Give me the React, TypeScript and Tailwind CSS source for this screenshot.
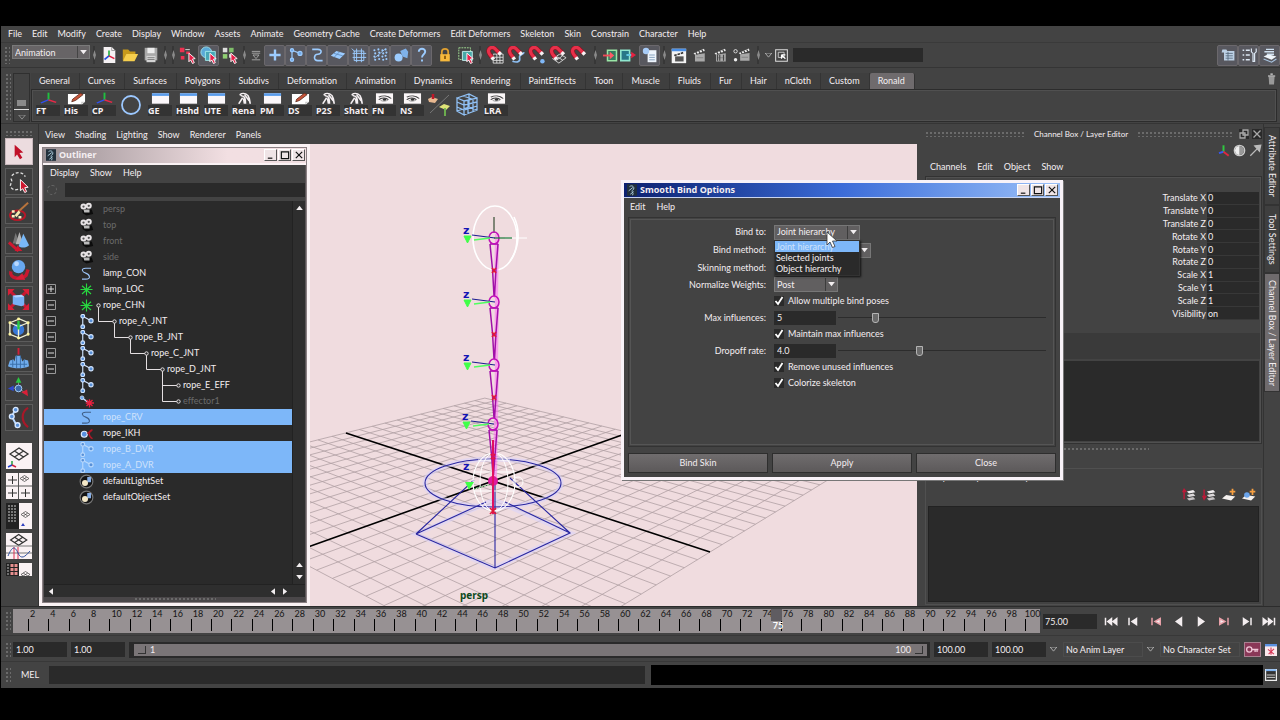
import React from "react";

type P = { children?: React.ReactNode };

/* ---------- small shared pieces ---------- */

const Svg = ({ children, size = "size-[18px]" }: P & { size?: string }) => (
  <svg viewBox="0 0 20 20" className={`${size} shrink-0`} fill="none" aria-hidden="true">
    {children}
  </svg>
);

const Sep = ({ w = "w-[8px]" }: { w?: string }) => (
  <span className={`${w} flex h-full shrink-0 items-center justify-center`}>
    <svg viewBox="0 0 6 18" className="h-[18px] w-[6px]" fill="none">
      <path d="M3 0v18" stroke="#2c2c2c" />
      <path d="M3.500 4 L5 9 L3.500 14 L2 9Z" fill="#8a8a8a" />
    </svg>
  </span>
);

const Dots = ({ className }: { className: string }) => (
  <span
    className={`${className} block shrink-0 bg-[radial-gradient(#6b6b6b_0.8px,transparent_1px)] bg-[length:4px_4px]`}
  />
);

const Tri = ({ className = "" }: { className?: string }) => (
  <svg viewBox="0 0 8 6" className={`h-[5px] w-[7px] ${className}`} aria-hidden="true">
    <path d="M0 0h8L4 5z" fill="#f2eef0" />
  </svg>
);

const Menu = ({ items, className = "" }: { items: string[]; className?: string }) => (
  <nav className={`flex items-center ${className}`}>
    {items.map((t) => (
      <button key={t} type="button" className="whitespace-nowrap">
        {t}
      </button>
    ))}
  </nav>
);

const Tool = ({ children, on, label, w = "w-[21px]" }: P & { on?: boolean; label: string; w?: string }) => (
  <button
    type="button"
    aria-label={label}
    className={`${w} flex h-[21px] shrink-0 items-center justify-center ${
      on ? "rounded-[2px] border border-[#6b686c] bg-[#58585f]" : ""
    }`}
  >
    {children}
  </button>
);

const Cursor = () => <path d="M11 8l7 6-3 .5 2 4-2 1-2-4-2 2z" fill="#e8204a" stroke="#fff" strokeWidth="1" />;

/* ---------- status line icons ---------- */

const NewScene = () => (
  <Svg>
    <path d="M4 1h9l4 4v14H4z" fill="#f6f2f4" />
    <path d="M13 1v4h4" stroke="#999" />
    <path d="M10 11V5" stroke="#20b040" strokeWidth="1.800" />
    <path d="M10 11l-5 4" stroke="#2850e0" strokeWidth="1.800" />
    <path d="M10 11l6 3" stroke="#e02040" strokeWidth="1.800" />
  </Svg>
);
const OpenScene = () => (
  <Svg>
    <path d="M2 16V4h6l2 2h6v3" fill="#c79a1c" />
    <path d="M2 17L6 9h13l-4 8z" fill="#f6cf4e" />
  </Svg>
);
const Save = () => (
  <Svg>
    <path d="M3 2h14v14H3z" fill="#a9a9a9" />
    <path d="M6 2h8v6H6z" fill="#ececec" />
    <path d="M5 11h10v7H5z" fill="#d4d4d4" />
    <path d="M6 13h8M6 15h8" stroke="#777" />
  </Svg>
);
const SelHier = () => (
  <Svg>
    <path d="M1 2h5v5H1zM8 6h4v3H8zM2 11h4v4H2z" fill="#ee3050" />
    <path d="M7 4h5" stroke="#ddd" />
    <Cursor />
  </Svg>
);
const SelObj = () => (
  <Svg>
    <circle cx="7" cy="7" r="6" fill="#5aa9d8" stroke="#9fe4ee" />
    <path d="M6 6h11v10H6z" fill="#48a8b8" stroke="#a4ecec" />
    <Cursor />
  </Svg>
);
const SelComp = () => (
  <Svg>
    <path d="M2 2h5v5H2z" fill="#dcdcdc" />
    <path d="M9 2h5v5H9z" fill="#7fbf6a" />
    <path d="M2 9h5v5H2z" fill="#8fcf72" />
    <path d="M9 9h4v4H9z" fill="#dcdcdc" />
    <Cursor />
  </Svg>
);
const B = "#9cccff";
const masks: [string, React.ReactNode][] = [
  ["Handles", <path d="M10 3v14M3 10h14" stroke={B} strokeWidth="3" />],
  [
    "Joints",
    <g stroke={B} strokeWidth="1.500">
      <path d="M5 4v12M5 4l10 4" />
      <g fill="#6fa8e8">
        <circle cx="5" cy="4" r="2" />
        <circle cx="5" cy="16" r="2" />
        <circle cx="15" cy="8" r="2.500" />
      </g>
    </g>,
  ],
  ["Curves", <path d="M4 3h7c6 0 5 6 0 6s-6 8 0 8h6" stroke={B} strokeWidth="2" />],
  [
    "Surfaces",
    <g>
      <path d="M1 11l7-6 11 3-7 7z" fill={B} />
      <path d="M5 8l11 3M12 6l-7 7" stroke="#5d86b8" />
    </g>,
  ],
  ["Deformers", <path d="M4 5h12v12H4zM1 2l4 4M13 2v17M7 2v17M2 8h17M2 13h17" stroke={B} strokeWidth="1.200" />],
  [
    "Dynamics",
    <g fill={B}>
      {[3, 8, 13, 17].map((x, i) =>
        [4, 8, 12, 16].map((y, j) => <circle key={`${i}${j}`} cx={x + (j % 2)} cy={y - (i % 2)} r="1.300" />),
      )}
      <path d="M3 14L16 3" stroke={B} />
    </g>,
  ],
  [
    "Rendering",
    <g fill={B}>
      <circle cx="7" cy="13" r="5" />
      <path d="M9 5l7-3 3 4-1 8-6-2z" fill="#7fb2ea" />
    </g>,
  ],
  ["Miscellaneous", <path d="M6 6c0-5 8-5 8 0 0 3-4 3-4 7M10 15.500v2.500" stroke={B} strokeWidth="2.400" />],
];

const Magnet = ({ children }: P) => (
  <Svg>
    {children}
    <path d="M7 13L4 9C0 3 7 -1 11 4l4 4" stroke="#8c1020" strokeWidth="5" />
    <path d="M7 13L4 9C0 3 7 -1 11 4l4 4" stroke="#e8304a" strokeWidth="3.600" />
    <path d="M6.500 12.500l2 2.500M14 7l2.500 2.500" stroke="#f6f2f4" strokeWidth="4" />
  </Svg>
);
const magnets: [string, React.ReactNode][] = [
  ["Snap to grids", <path d="M8 9h11v10H8zM12 9v10M15.500 9v10M8 12.500h11M8 16h11" stroke="#ddd" />],
  ["Snap to curves", <path d="M19 7c-1 3-6 2-5 6s-2 6-8 4" stroke="#8ec0f4" strokeWidth="1.800" />],
  ["Snap to points", <circle cx="16" cy="17" r="2.500" fill="#80b8f8" />],
  ["Snap to planes", <path d="M4 14l8-5 7 4-8 6zM8 11.500l7 4M8 16l7-5" stroke="#ddd" />],
  ["Make live", null],
];

const Clap = ({ children }: P) => (
  <g>
    <path d="M4 9l13-2v11H4z" fill="#a9a9a9" />
    <path d="M2 7l14-6 1 3L4 9z" fill="#ececec" />
    <path d="M5 5.500l2 3M9 4l2 3M13 2.500l2 3" stroke="#333" strokeWidth="1.500" />
    <path d="M6 13h9" stroke="#777" />
    {children}
  </g>
);

const StatusLine = () => (
  <div className="flex h-[25px] items-center border-t border-[#3a3a3a] pl-[3px]">
    <Dots className="mr-[2px] h-[18px] w-[6px]" />
    <div className="relative mt-[2px] h-[14px] w-[78px] self-start">
      <select
        aria-label="Menu set"
        className="h-full w-full appearance-none border border-[#7a7a7a] bg-[#676466] pl-[2px] leading-[11px]"
      >
        <option>Animation</option>
      </select>
      <span className="pointer-events-none absolute inset-y-px right-px flex w-[12px] items-center justify-center border-l border-[#444]">
        <Tri />
      </span>
    </div>
    <Sep />
    <Tool label="New scene"><NewScene /></Tool>
    <Tool label="Open scene"><OpenScene /></Tool>
    <Tool label="Save scene"><Save /></Tool>
    <Sep />
    <Sep />
    <Tool label="Select by hierarchy"><SelHier /></Tool>
    <Tool label="Select by object" on><SelObj /></Tool>
    <Tool label="Select by component"><SelComp /></Tool>
    <Sep />
    <Tool label="Selection mask" w="w-[16px]">
      <Svg size="size-[12px]"><path d="M3 4h14M3 7h14M5 10h10l-5 6zM3 18h14" stroke="#aaa" strokeWidth="1.500" /></Svg>
    </Tool>
    {masks.map(([n, d]) => (
      <Tool key={n} label={n} on><Svg size="size-[16px]">{d}</Svg></Tool>
    ))}
    <span className="w-[2px]" />
    <Tool label="Lock selection">
      <Svg size="size-[16px]">
        <path d="M6 10V6c0-5 8-5 8 0v4" stroke="#e0a030" strokeWidth="2.200" />
        <path d="M4 9h12v9H4z" fill="#f6b83c" />
        <path d="M10 11v4" stroke="#7a4a00" strokeWidth="2" />
      </Svg>
    </Tool>
    <Tool label="Highlight selection">
      <Svg>
        <path d="M2 2h13v13H2z" stroke="#a8e89a" strokeDasharray="2 1" />
        <path d="M6 6h11v10H6z" fill="#48a8a8" stroke="#c8f4f4" />
        <Cursor />
      </Svg>
    </Tool>
    <Sep />
    {magnets.map(([n, d]) => (
      <Tool key={n} label={n}><Magnet>{d}</Magnet></Tool>
    ))}
    <Sep w="w-[12px]" />
    <Tool label="Inputs" w="w-[18px]">
      <Svg size="size-[15px]">
        <path d="M6 3h12v14H6z" fill="#357a60" stroke="#9ae6a6" strokeWidth="2" />
        <path d="M0 10h10" stroke="#f04a58" strokeWidth="2.500" />
        <path d="M9 5l6 5-6 5z" fill="#ff5a66" />
      </Svg>
    </Tool>
    <Tool label="Outputs" w="w-[18px]">
      <Svg size="size-[16px]">
        <path d="M1 4h11v13H1z" fill="#287888" stroke="#8fe6ce" strokeWidth="2" />
        <path d="M8 10h8" stroke="#60c8e0" strokeWidth="2.500" />
        <path d="M14 6l6 4-6 4z" fill="#e82040" />
      </Svg>
    </Tool>
    <span className="w-[2px]" />
    <Tool label="Construction history" on>
      <Svg size="size-[16px]">
        <path d="M7 4h11v15H7z" fill="#eef4fc" />
        <path d="M9 10h7M9 13h7M9 16h7" stroke="#7090b0" />
        <circle cx="5" cy="5" r="4" fill="#a8ccf8" />
      </Svg>
    </Tool>
    <Sep />
    <Tool label="Render view">
      <Svg size="size-[17px]">
        <path d="M2 2h17v17H2z" fill="#f4f4f4" />
        <path d="M2 2h17v3H2z" fill="#4a90e8" />
        <path d="M6 11h10v6H6z" fill="#555" />
        <path d="M5 10l11-3.500" stroke="#333" strokeWidth="2" strokeDasharray="3 1" />
      </Svg>
    </Tool>
    <Tool label="Render frame"><Svg size="size-[15px]"><Clap /></Svg></Tool>
    <Tool label="IPR render">
      <Svg size="size-[15px]"><Clap><path d="M6 9v8M9 9v8M14 9v8" stroke="#444" strokeWidth="1.500" /></Clap></Svg>
    </Tool>
    <Tool label="Render settings">
      <Svg size="size-[17px]">
        <g transform="translate(5 1) scale(0.85)"><Clap /></g>
        <circle cx="3" cy="5" r="2" stroke="#eee" />
        <circle cx="3" cy="15" r="2" fill="#eee" />
      </Svg>
    </Tool>
    <Sep w="w-[12px]" />
    <Tool label="Input mode" w="w-[9px]"><svg viewBox="0 0 8 6" className="h-[5px] w-[7px]"><path d="M0 0h8L4 5z" stroke="#bbb" fill="none" /></svg></Tool>
    <Tool label="Quick selection" w="w-[17px]">
      <Svg size="size-[13px]">
        <path d="M1 1h18v18H1z" stroke="#ddd" strokeWidth="1.600" />
        <path d="M5 5h9v8H5z" stroke="#ccc" strokeWidth="1.400" />
        <path d="M10 9l6 6M10 9v6M10 9h6" stroke="#fff" strokeWidth="1.800" />
      </Svg>
    </Tool>
    <input aria-label="Select by name" className="ml-[3px] h-[14px] w-[130px] bg-[#2a2a2a]" />
    <span className="flex-1" />
    <div className="flex">
      <Tool label="Attribute editor" on>
        <Svg size="size-[16px]">
          <path d="M3 3h5l1 2h9v12H5V7H2z" fill="#bcd0e4" />
          <path d="M7 8h9M7 11h9M7 14h9M10 6v11" stroke="#506478" />
        </Svg>
      </Tool>
      <Tool label="Tool settings" on>
        <Svg size="size-[16px]">
          <path d="M2 4h2M6 4h5M2 10h2M6 10h5M2 16h2M6 16h5" stroke="#dbe6f2" strokeWidth="2" />
          <path d="M13 2v4l2 2v10h2V8l2-2V2" stroke="#dbe6f2" strokeWidth="1.500" />
        </Svg>
      </Tool>
      <Tool label="Channel box" on>
        <Svg size="size-[16px]">
          <path d="M2 12l6-3 10 3-6 4z" fill="#eef4fa" />
          <path d="M2 15l10 4 6-4" stroke="#a8c4e0" strokeWidth="1.500" />
          <path d="M5 3h10M3 6h12M6 9h9" stroke="#cfe0f0" strokeWidth="1.800" />
        </Svg>
      </Tool>
    </div>
  </div>
);

/* ---------- shelf ---------- */

const shelfTabs = [
  "General", "Curves", "Surfaces", "Polygons", "Subdivs", "Deformation", "Animation", "Dynamics", "Rendering",
  "PaintEffects", "Toon", "Muscle", "Fluids", "Fur", "Hair", "nCloth", "Custom", "Ronald",
];

const Axes = () => (
  <>
    <path d="M10 12V1" stroke="#20c040" strokeWidth="2" />
    <path d="M10 12l-8 5" stroke="#3050f0" strokeWidth="2" />
    <path d="M10 12l8 4" stroke="#e82848" strokeWidth="2" />
  </>
);
const Pencil = () => (
  <>
    <path d="M1 3h18v12l-3 4H1z" fill="#fff" />
    <path d="M5 15l1-4 8-9 3 2-8 9z" fill="#c8553a" stroke="#5a2a1a" />
    <path d="M15 19l4-4h-4z" fill="#ccc" />
  </>
);
const Win = () => (
  <>
    <path d="M1 2h18v16H1z" fill="#fbf7fa" />
    <path d="M1 2h18v4H1z" fill="#5a9cec" />
  </>
);
const Mel = () => (
  <path
    d="M5 4c4-4 9-1 10 6l1 8M6 6c4-1 5 3 5 12M8 9l-4 9M9 10l1 8M10 4l5 10M5 4l5 4"
    stroke="#f5f0f2"
    strokeWidth="1.800"
  />
);
const Eye = () => (
  <>
    <path d="M1 2h18v16H1z" fill="#fbf7f8" />
    <path d="M4 8c4-3 9-3 13 2M4 12c3-4 8-3 10 0" stroke="#444" strokeWidth="1.500" />
    <path d="M6 13c3 2 6 1 8-1" stroke="#888" strokeWidth="1" />
    <circle cx="10" cy="11.500" r="1.800" fill="#333" />
  </>
);

const shelf: [string, React.ReactNode][] = [
  ["FT", <Axes />], ["His", <Pencil />], ["CP", <Axes />],
  ["circle", null],
  ["GE", <Win />], ["Hshd", <Win />], ["UTE", <Win />], ["Rena", <Mel />], ["PM", <Win />],
  ["DS", <Pencil />], ["P2S", <Mel />], ["Shatt", <Mel />], ["FN", <Eye />], ["NS", <Eye />],
  ["graph", null], ["lattice", null], ["LRA", <Eye />],
];

const bigShelf: Record<string, React.ReactNode> = {
  circle: <circle cx="12" cy="12" r="9" stroke="#9cc8ff" strokeWidth="1.800" />,
  graph: (
    <>
      <path d="M3 20L22 2" stroke="#777" />
      <path d="M1 6l4-2 6 2-3 4-6-1z" fill="#e8b890" />
      <path d="M6 1v5" stroke="#c01828" strokeWidth="2.500" />
      <path d="M12 14l5-3 6 2-4 4z" fill="#e0e478" />
      <path d="M18 15v8" stroke="#70b850" strokeWidth="1.800" />
    </>
  ),
  lattice: (
    <path
      d="M2 5l7 3v14l-7-4zM9 8l13-3v12L9 22M2 5l12-4 8 4M2 9l7 3 13-3M2 14l7 3 13-4M13 7v14M18 6v13M14 1v13l-12 4M14 14l8 3M8 3l9 3"
      stroke="#90c0f4"
      strokeWidth="1.300"
    />
  ),
};

const Shelf = () => (
  <div className="flex h-[56px] border-t border-[#353535] pt-[5px] pl-[4px]">
    <Dots className="h-[48px] w-[6px]" />
    <div className="mr-px ml-[2px] flex h-[49px] w-[17px] flex-col items-center border border-[#2f2f2f]">
      <span className="mt-[26px] h-[6px] w-[9px] bg-[#8a8a8a]" />
      <span className="mt-[3px] h-px w-full bg-[#ddd]" />
      <svg viewBox="0 0 8 6" className="mt-[5px] h-[5px] w-[8px]"><path d="M0 0h8L4 5z" stroke="#999" fill="none" /></svg>
    </div>
    <div className="flex min-w-0 flex-1 flex-col pr-[3px]">
      <div className="flex h-[16px]">
        {shelfTabs.map((t) => (
          <button
            key={t}
            type="button"
            className={`h-full border-r pr-[9px] pl-[8px] whitespace-nowrap ${
              t === "Ronald" ? "rounded-t-[2px] border-[#333] bg-[#6f6b6d]" : "border-[#343434] bg-[#3f3f3f]"
            }`}
          >
            {t}
          </button>
        ))}
        <span className="flex-1" />
        <button type="button" aria-label="Delete shelf item" className="self-start">
          <Svg size="size-[12px]">
            <path d="M6 6h10l-1 13H7z" fill="#999" />
            <path d="M5 5h12M9 2h4" stroke="#ddd" strokeWidth="2" />
          </Svg>
        </button>
      </div>
      <div className="flex h-[33px] border border-[#2c2c2c] pt-[2px] pl-px outline outline-[#505050] outline-offset-[-2px]">
        {shelf.map(([n, d], i) =>
          d ? (
            <button key={i} type="button" className="flex w-[28px] flex-col items-start pl-[3px] text-left">
              <svg viewBox="0 0 20 20" preserveAspectRatio="none" className="ml-[3px] h-[13px] w-[19px]" fill="none">{d}</svg>
              <b className="w-[24px] bg-[#333] font-['Noto_Sans'] text-[9px] leading-[11px] whitespace-nowrap">{n}</b>
            </button>
          ) : (
            <button key={i} type="button" aria-label={n} className="flex w-[28px] justify-center pt-px">
              <svg viewBox="0 0 24 24" className="size-[24px]" fill="none">{bigShelf[n]}</svg>
            </button>
          ),
        )}
      </div>
    </div>
  </div>
);

/* ---------- tool box ---------- */

const tools: [string, React.ReactNode][] = [
  ["Select", <path d="M8 5l9 8-4 .5 3 5-2.500 1.500-3-5-2.500 3z" fill="#c01028" />],
  [
    "Lasso",
    <>
      <path d="M5 6c4-5 12-4 14 1M4 9c3 3-2 6 0 9s5 3 8 2" stroke="#ddd" strokeWidth="1.400" strokeDasharray="3 2" />
      <path d="M14 10l8 8-3.500.5 2 4-2 1-2-4-2.500 2z" fill="#d01830" stroke="#fff" />
    </>,
  ],
  [
    "Paint selection",
    <>
      <ellipse cx="11" cy="17" rx="8" ry="5" stroke="#b81828" strokeWidth="2" />
      <path d="M12 13l10-9" stroke="#b8743c" strokeWidth="2" />
      <path d="M8 17l4-5 2 2-4 5z" fill="#f6e8b0" />
      <path d="M5 13h3M5 18h3M12 19h3" stroke="#fff2c0" strokeWidth="2.500" />
    </>,
  ],
  [
    "Move",
    <>
      <path d="M6 15L9 4l4 11z" fill="#777" />
      <path d="M9 16L13 3l4 13z" fill="#b4b4b4" />
      <path d="M12 18L17 5l6 12c-3 3-8 3-11 1z" fill="#78b8f8" />
      <path d="M2 14l10 9" stroke="#d01830" strokeWidth="3" />
      <path d="M8 23h8l-5-6z" fill="#d01830" />
    </>,
  ],
  [
    "Rotate",
    <>
      <path d="M4 14c-2 8 11 9 16 4l2-6" stroke="#c81830" strokeWidth="3.500" />
      <path d="M9 22l7-6 3 7z" fill="#d82038" />
      <circle cx="12" cy="9" r="7" fill="#68a8f0" />
      <circle cx="10" cy="6" r="2.500" fill="#b8d8ff" />
    </>,
  ],
  [
    "Scale",
    <>
      <path d="M3 3l18 18M21 3L3 21" stroke="#c81830" strokeWidth="3" />
      <path d="M1 1h7L1 8zM23 1v7l-7-7zM1 23v-7l7 7zM23 23h-7l7-7z" fill="#d82038" />
      <path d="M6 8l9-1 3 2v9l-3 1-9-2z" fill="#78b0f4" />
      <path d="M6 8l9-1 3 2-9 1z" fill="#b0d4ff" />
    </>,
  ],
  [
    "Universal manipulator",
    <>
      <circle cx="12" cy="13" r="6" fill="#3878d8" />
      <path d="M3 6l10-4 9 4v12l-9 4-10-4zM3 6l9 4 10-4M12 10v12" stroke="#f0f0d8" strokeWidth="1.400" />
      <path d="M12 4v9" stroke="#28c840" strokeWidth="2.500" />
      <path d="M3 6h.1M22 6h.1M3 18h.1M22 18h.1M12 22h.1M12 2h.1" stroke="#fff6a0" strokeWidth="3" strokeLinecap="round" />
    </>,
  ],
  [
    "Soft modification",
    <>
      <path d="M1 20l2-6 4-1 1 2 1-6h5l2 6 2-2 4 1 1 6c-6 3-16 3-22 0z" fill="#70acec" />
      <path d="M6 13v8M10 9v13M14 9v13M18 13v8M3 18h18" stroke="#3a6ea8" />
      <path d="M12 8V1" stroke="#d02038" strokeWidth="2" />
    </>,
  ],
  [
    "Show manipulator",
    <>
      <path d="M12 12l-7 1M12 12l7 6M12 12V6" stroke="#888" />
      <path d="M9 7l3-6 3 6z" fill="#28c840" />
      <path d="M1 13l6-3v6z" fill="#3048d0" />
      <path d="M15 17l6-3 1 7z" fill="#d82038" />
      <circle cx="12" cy="13" r="3.500" fill="#3a68a8" stroke="#a8ccf4" />
    </>,
  ],
  [
    "Last tool",
    <>
      <path d="M9 3L5 11l5 9" stroke="#b8d8ff" strokeWidth="2" />
      <g fill="#5a90d8" stroke="#d8e8ff" strokeWidth="1.400">
        <circle cx="9" cy="4" r="2.500" />
        <circle cx="5" cy="11" r="2.500" />
        <circle cx="11" cy="20" r="2.500" />
      </g>
      <path d="M22 2c-7 4-8 14 0 20" stroke="#a81828" strokeWidth="2.200" />
    </>,
  ],
];

const MiniGrid = ({ x = 0, y = 0, s = 1 }: { x?: number; y?: number; s?: number }) => (
  <path
    transform={`translate(${x} ${y}) scale(${s})`}
    d="M4 11l9-6 9 6-9 6zM8.500 8l9 6M17.500 8l-9 6"
    stroke="#333"
    strokeWidth="1.300"
  />
);
const layouts: [string, React.ReactNode][] = [
  [
    "Single perspective",
    <>
      <path d="M0 0h26v26H0z" fill="#faf2f4" />
      <MiniGrid />
      <path d="M6 22v-4" stroke="#20a040" strokeWidth="1.500" />
      <path d="M6 22l-4 2" stroke="#2040d0" strokeWidth="1.500" />
      <path d="M6 22l4 2" stroke="#d02040" strokeWidth="1.500" />
    </>,
  ],
  [
    "Four view",
    <>
      <path d="M0 0h26v26H0z" fill="#faf2f4" />
      <path d="M12.500 0v26M0 13h26" stroke="#555" />
      <path d="M6.500 3v8M2 7h9M6.500 16v8M2 20h9M19.500 16v8M15 20h9" stroke="#333" />
      <MiniGrid x={12} y={0} s={0.5} />
    </>,
  ],
  [
    "Outliner and perspective",
    <>
      <path d="M0 0h13v26H0z" fill="#222" />
      <path d="M13 0h13v26H13z" fill="#faf2f4" />
      <path d="M2 3h8M2 6h8M2 9h8M2 12h8M2 15h8M2 18h8" stroke="#ccc" strokeDasharray="2 1" />
      <MiniGrid x={13} y={6} s={0.5} />
      <path d="M15 23l2-3 2 3z" fill="#3040c0" />
    </>,
  ],
  [
    "Perspective and graph",
    <>
      <path d="M0 0h26v26H0z" fill="#faf2f4" />
      <MiniGrid x={1} y={-3} s={0.9} />
      <path d="M0 13h26M0 20h26" stroke="#777" />
      <path d="M8 14v12M12 14v12" stroke="#e03050" />
      <path d="M2 23c4-10 7-10 10-3s7 4 12-2" stroke="#3050a0" />
    </>,
  ],
];

const ToolBox = () => (
  <aside className="flex w-[38px] shrink-0 flex-col items-center border-r border-[#333] pr-[2px]">
    <Dots className="mt-[6px] mb-[2px] h-[6px] w-[27px]" />
    <div className="flex h-[293px] flex-col justify-between">
      {tools.map(([n, d], i) => (
        <button
          key={n}
          type="button"
          aria-label={n}
          className={`flex h-[27px] w-[28px] items-center justify-center border ${
            i === 0 ? "border-[#c8b8bc] bg-[#ecdcdf]" : "border-[#5c5c5c] bg-[#3d3d3d]"
          }`}
        >
          <svg viewBox="0 0 24 24" className="size-[23px]" fill="none">{d}</svg>
        </button>
      ))}
    </div>
    <div className="mt-[12px] flex flex-col gap-[4px]">
      {layouts.map(([n, d]) => (
        <button key={n} type="button" aria-label={n} className="block size-[26px]">
          <svg viewBox="0 0 26 26" className="size-full" fill="none">{d}</svg>
        </button>
      ))}
      <button type="button" aria-label="Hypershade and perspective" className="block h-[13px] w-[26px]">
        <svg viewBox="0 0 26 13" className="size-full" fill="none">
          <path d="M0 0h13v13H0z" fill="#222" />
          <path d="M13 0h13v13H13z" fill="#faf2f4" />
          <path d="M6 1v11M10 1v11" stroke="#e89090" strokeWidth="3" strokeDasharray="3 1" />
          <path d="M2 1v11" stroke="#bbb" strokeDasharray="2 1" />
          <MiniGrid x={13} y={6} s={0.5} />
        </svg>
      </button>
    </div>
  </aside>
);

/* ---------- 3D viewport ---------- */

const project = (u: number, v: number) => {
  const w = 1 - 0.192 * u + 0.205 * v;
  return `${((493 + 80.7 * u + 264.9 * v) / w).toFixed(1)} ${((481 - 35 * u + 40.2 * v) / w).toFixed(1)}`;
};
/* the v axis runs from the lower left to the upper right of the view */
const gridPath = Array.from({ length: 25 }, (_, i) => i / 12 - 1)
  .filter((t) => Math.abs(t) > 0.01)
  .map((t) => `M${project(t, -1)}L${project(t, 1)}M${project(-1, t)}L${project(1, t)}`)
  .join("");

const joints = [
  [494, 238, 64],
  [494, 302, 63],
  [494, 365, 59],
  [493, 424, 57],
];

const Scene = () => (
  <svg
    viewBox="39 144 878 462"
    preserveAspectRatio="xMinYMin slice"
    className="absolute inset-0 size-full bg-[#f0dcdf]"
    fill="none"
  >
    <path d={gridPath} stroke="#b0a0a3" strokeWidth="0.8" />
    <path d={`M${project(-1, 0)}L${project(1, 0)}M${project(0, -1)}L${project(0, 1)}`} stroke="#000" strokeWidth="1.600" />
    <g stroke="#dcd4fa" strokeWidth="5" opacity="0.6">
      <path d="M416 534l78 34 76-35-76-33z" />
      <ellipse cx="493" cy="483" rx="68" ry="24" />
    </g>
    <g stroke="#2826a0" strokeWidth="1.100">
      <ellipse cx="493" cy="483" rx="68" ry="24" />
      <path d="M416 534l79 34 75-35-65-31M416 534l70-32M416 534l58-54M570 533l-60-55M495 482v86" />
    </g>
    <g stroke="#fff" strokeWidth="1.600">
      <ellipse cx="495" cy="238" rx="22" ry="32" />
      <path d="M514 217c6 12 6 30-4 44" />
      <ellipse cx="494" cy="482" rx="21" ry="29" strokeWidth="1.200" />
      <ellipse cx="494" cy="482" rx="14" ry="29" strokeWidth="1" />
      <path d="M478 460h32M474 472h40M474 491h40M505 238h22" strokeWidth="1" />
      <circle cx="518" cy="482" r="5" strokeWidth="1" />
    </g>
    <path d="M494 217v16" stroke="#103010" />
    {joints.map(([x, y, len]) => (
      <g key={y}>
        <path d={`M${x + 3} ${y - 4}l-1 ${len}`} stroke="#ff70f4" strokeWidth="4" opacity="0.55" />
        <path d={`M${x - 4} ${y + 6}l2.500 25 1.500 ${len - 37}M${x + 4} ${y + 6}l-2 25-1.500 ${len - 37}M${x - 4} ${y + 6}h8`} stroke="#a010a8" strokeWidth="1.500" />
        <ellipse cx={x} cy={y} rx="5" ry="6" stroke="#c010b8" strokeWidth="1.500" />
        <path d={`M${x - 2} ${y + 30}l4 5m0-5l-4 5`} stroke="#e01838" strokeWidth="1.600" />
        <path d={`M${x - 22} ${y - 3}L${x + 1} ${y}`} stroke="#1c1c90" strokeWidth="1.200" />
        <path d={`M${x - 20} ${y + 2}L${x - 4} ${y}`} stroke="#50ff60" strokeWidth="1.600" />
        <path d={`M${x - 30} ${y - 2}h7l-3.500 7z`} fill="#40ff48" stroke="#40ff48" />
        <text x={x - 31} y={y - 4} fill="#1414b4" className="font-['DejaVu_Sans'] text-[11px] font-bold">z</text>
      </g>
    ))}
    <path d="M494 238h18" stroke="#187838" strokeWidth="1.200" />
    <circle cx="493" cy="481" r="5" fill="#e018a0" />
    <path d="M493 440v74" stroke="#e01060" strokeWidth="2" />
    <path d="M490 508l6 6m0-6l-6 6" stroke="#e01838" strokeWidth="1.600" />
    <path d="M465 482h9l-5 8z" fill="#40ff48" />
    <path d="M474 489l18-5" stroke="#208030" strokeDasharray="2 1" />
    <text x="463" y="470" fill="#1414b4" className="font-['DejaVu_Sans'] text-[11px] font-bold">z</text>
    <text x="460" y="599" fill="#0c4a20" className="font-['Noto_Sans'] text-[10px] font-bold">persp</text>
  </svg>
);

/* ---------- window chrome ---------- */

const WinButtons = () => (
  <div className="flex gap-px text-black">
    {[
      ["Minimize", "M2 9h5"],
      ["Maximize", "M1.500 2h8v7.500h-8z"],
      ["Close window", "M2 2l7 7M9 2l-7 7"],
    ].map(([n, d]) => (
      <button
        key={n}
        type="button"
        aria-label={n}
        className="flex h-[12px] w-[13px] items-center justify-center border border-t-white border-r-[#555] border-b-[#555] border-l-white bg-[#efe4e6]"
      >
        <svg viewBox="0 0 11 11" className="size-[10px]" fill="none"><path d={d} stroke="#111" strokeWidth="1.300" /></svg>
      </button>
    ))}
  </div>
);

const AppIcon = () => (
  <svg viewBox="0 0 12 14" className="h-[12px] w-[10px]" fill="none">
    <path d="M0 0h12v14H0z" fill="#22303c" />
    <path d="M3 3c4-3 7 2 4 4s3 5-1 6M2 8l5-4M4 12l4-3" stroke="#a8c8d8" strokeWidth="1.200" />
  </svg>
);

/* ---------- outliner ---------- */

type Kind = "cam" | "curve" | "loc" | "joint" | "eff" | "ik" | "set";
type Node = { name: string; kind: Kind; depth?: number; box?: "+" | "-"; dim?: boolean; sel?: boolean; open?: boolean; more?: boolean };

const nodes: Node[] = [
  { name: "persp", kind: "cam", dim: true },
  { name: "top", kind: "cam", dim: true },
  { name: "front", kind: "cam", dim: true },
  { name: "side", kind: "cam", dim: true },
  { name: "lamp_CON", kind: "curve" },
  { name: "lamp_LOC", kind: "loc", box: "+" },
  { name: "rope_CHN", kind: "loc", box: "-", open: true },
  { name: "rope_A_JNT", kind: "joint", box: "-", depth: 1, open: true },
  { name: "rope_B_JNT", kind: "joint", box: "-", depth: 2, open: true },
  { name: "rope_C_JNT", kind: "joint", box: "-", depth: 3, open: true },
  { name: "rope_D_JNT", kind: "joint", box: "-", depth: 4, open: true },
  { name: "rope_E_EFF", kind: "joint", depth: 5, more: true },
  { name: "effector1", kind: "eff", depth: 5, dim: true },
  { name: "rope_CRV", kind: "curve", sel: true },
  { name: "rope_IKH", kind: "ik" },
  { name: "rope_B_DVR", kind: "joint", sel: true },
  { name: "rope_A_DVR", kind: "joint", sel: true },
  { name: "defaultLightSet", kind: "set" },
  { name: "defaultObjectSet", kind: "set" },
];

const nodeIcon = (k: Kind, sel?: boolean) => {
  switch (k) {
    case "cam":
      return (
        <>
          <path d="M4 10h13l2 6-9 2-5-3z" fill="#0c0c0c" />
          <circle cx="6" cy="6" r="4" fill="#e8e4e6" />
          <circle cx="13" cy="5" r="4" fill="#e8e4e6" />
          <circle cx="6" cy="6" r="1.500" fill="#555" />
          <circle cx="13" cy="5" r="1.500" fill="#555" />
          <path d="M6 10h8v4H7z" fill="#bbb" />
        </>
      );
    case "curve":
      return <path d="M16 3H9C2 3 4 8 9 9.500s8 8 0 8H4" stroke={sel ? "#406088" : "#9cc4f8"} strokeWidth="1.500" />;
    case "loc":
      return <path d="M10 2v16M2 10h16M4 5l12 11M16 5L4 16" stroke="#28d840" strokeWidth="1.500" />;
    case "joint":
      return (
        <g stroke={sel ? "#b8d8fc" : "#d0e4ff"} strokeWidth="1.500" fill="#5890d8">
          <path d="M5 3v14M5 3l11 6" />
          <circle cx="5" cy="3" r="2.500" />
          <circle cx="5" cy="17" r="2.500" />
          <circle cx="16" cy="9" r="2.800" />
        </g>
      );
    case "eff":
      return (
        <>
          <path d="M4 5l8 6" stroke="#c8e0ff" strokeWidth="2" />
          <circle cx="4" cy="5" r="2.500" fill="#70a8f0" stroke="#d8e8ff" />
          <path d="M14 7v11M9 12h11M10 8l8 8M18 8l-8 8" stroke="#e82040" strokeWidth="1.800" />
        </>
      );
    case "ik":
      return (
        <>
          <path d="M18 5c-6 2-6 8 0 12" stroke="#b01828" strokeWidth="2" />
          <circle cx="7" cy="11" r="4" fill="#5890e0" stroke="#e0ecff" strokeWidth="1.500" />
          <path d="M11 10l6-4" stroke="#b01828" strokeWidth="2" />
        </>
      );
    case "set":
      return (
        <>
          <circle cx="10" cy="10" r="8.500" fill="#151515" stroke="#777" strokeWidth="1.500" />
          <path d="M11 4h5v7h-5z" fill="#88b0e8" />
          <circle cx="8" cy="12" r="4" fill="#f4e8c8" />
        </>
      );
  }
};

const Row = ({ n }: { n: Node }) => {
  const d = n.depth ?? 0;
  const w = 9 + 16 * d;
  const cx = 4 + 16 * d;
  return (
    <li className={`flex h-[16px] items-center ${n.sel ? "bg-[#7db7f9]" : ""}`}>
      <span className="flex w-[35px] pl-[2px]">
        {n.box && (
          <button type="button" aria-label={`Toggle ${n.name}`}>
            <svg viewBox="0 0 10 10" className="size-[10px]" fill="none">
              <path d="M.5.5h9v9h-9z" stroke="#999" />
              <path d={n.box === "+" ? "M2 5h6M5 2v6" : "M2 5h6"} stroke="#ddd" />
            </svg>
          </button>
        )}
      </span>
      <Svg size="size-[15px]">{nodeIcon(n.kind, n.sel)}</Svg>
      <svg viewBox={`0 0 ${w} 16`} style={{ width: w }} className="h-[16px] shrink-0" fill="none">
        {(n.open || d > 0) && (
          <g stroke="#e4dfe1">
            {d > 0 && <path d={`M${cx - 15.5} 0V8.500H${cx - 1}`} />}
            {n.more && <path d={`M${cx - 15.5} 8V16`} />}
            {n.open && <path d={`M${cx + 0.5} 10V16`} />}
            <circle cx={cx + 0.5} cy="8.500" r="1.700" fill="#2a2a2a" />
          </g>
        )}
      </svg>
      <span className={n.sel ? "text-[#cfe2fb]" : n.dim ? "text-[#6a6a6a]" : ""}>{n.name}</span>
    </li>
  );
};

const Outliner = () => (
  <section className="absolute top-0 left-0 flex h-full w-[271px] flex-col border-[3px] border-[#faf2f4] bg-[#434343] outline outline-[#8a8083] outline-offset-[-4px]">
    <header className="flex h-[18px] shrink-0 items-center gap-[3px] border-b-2 border-[#faf2f4] bg-linear-to-r from-[#9a9094] to-[#f2dfe2] to-70% pr-[2px] pl-[4px]">
      <AppIcon />
      <b className="flex-1 font-['Noto_Sans'] text-[9px]">Outliner</b>
      <WinButtons />
    </header>
    <div className="flex min-h-0 flex-1 flex-col border-x-2 border-[#5a5557]">
      <Menu items={["Display", "Show", "Help"]} className="h-[16px] gap-[11px] pl-[6px]" />
      <div className="flex h-[17px] items-center">
        <span className="ml-[3px] size-[10px] rounded-full border border-dashed border-[#666]" />
        <input aria-label="Filter" className="ml-[8px] h-[14px] min-w-0 flex-1 bg-[#2a2a2a]" />
      </div>
      <div className="mt-[3px] flex min-h-0 flex-1 bg-[#2a2a2a]">
        <ul className="flex-1">
          {nodes.map((n) => (
            <Row key={n.name} n={n} />
          ))}
        </ul>
        <div className="flex w-[13px] flex-col items-center justify-between border-l border-[#222] bg-[#2e2e2e] py-[4px]">
          <Tri className="rotate-180" />
          <div className="flex flex-col gap-[8px]">
            <Tri className="rotate-180" />
            <Tri />
          </div>
        </div>
      </div>
      <div className="flex h-[13px] items-center border-t border-[#222] bg-[#2e2e2e] px-[3px]">
        <Tri className="rotate-90" />
        <span className="flex-1" />
        <Tri className="mr-[6px] rotate-90" />
        <Tri className="mr-[13px] -rotate-90" />
      </div>
      <div className="flex h-[6px] justify-center bg-[#4a4749]"><Dots className="h-[4px] w-[82px]" /></div>
    </div>
  </section>
);

/* ---------- smooth bind dialog ---------- */

const Field = ({ label, id, children, h = "h-[18px]" }: P & { label?: string; id?: string; h?: string }) => (
  <div className={`flex ${h} items-center`}>
    <label htmlFor={id} className="w-[145px] shrink-0 pr-[8px] text-right">{label}</label>
    {children}
  </div>
);

const Drop = ({ id, w, options }: { id: string; w: string; options: string[] }) => (
  <div className={`relative h-[15px] ${w}`}>
    <select id={id} className="h-full w-full appearance-none border border-[#777] bg-[#615f60] pl-[2px] leading-[12px]">
      {options.map((o) => <option key={o}>{o}</option>)}
    </select>
    <span className="pointer-events-none absolute inset-y-px right-px flex w-[12px] items-center justify-center border-l border-[#3c3c3c]">
      <Tri />
    </span>
  </div>
);

const Check = ({ label }: { label: string }) => (
  <Field h="h-[16px]">
    <label className="relative flex items-center gap-[4px]">
      <input type="checkbox" defaultChecked className="peer size-[10px] appearance-none bg-[#2a2a2a]" />
      <svg viewBox="0 0 10 10" className="pointer-events-none absolute left-0 hidden size-[10px] peer-checked:block" fill="none">
        <path d="M1.500 5l2.500 3 4.500-7" stroke="#fff" strokeWidth="1.800" />
      </svg>
      {label}
    </label>
  </Field>
);

const Slide = ({ id, label, text, pos }: { id: string; label: string; text: string; pos: number }) => (
  <Field h="h-[17px]" label={label} id={id}>
    <input id={id} defaultValue={text} className="h-[14px] w-[62px] bg-[#2a2a2a] pl-[3px]" />
    <input
      type="range"
      aria-label={label}
      defaultValue={pos}
      className="mr-[9px] ml-[2px] h-[12px] min-w-0 flex-1 appearance-none bg-[linear-gradient(#2c2c2c,#2c2c2c)] bg-[length:100%_1px] bg-center bg-no-repeat [&::-webkit-slider-thumb]:h-[10px] [&::-webkit-slider-thumb]:w-[7px] [&::-webkit-slider-thumb]:appearance-none [&::-webkit-slider-thumb]:rounded-b-[3px] [&::-webkit-slider-thumb]:border [&::-webkit-slider-thumb]:border-[#b4b4b4] [&::-webkit-slider-thumb]:bg-[#6a6a6a]"
    />
  </Field>
);

const Dialog = () => (
  <section className="absolute top-[56px] left-[620px] flex h-[300px] w-[442px] flex-col border-[3px] border-[#f8f2f8] bg-[#434343] shadow-[1px_1px_0_#777]">
    <header className="flex h-[15px] shrink-0 items-center gap-[3px] border-b border-[#c8d4f0] bg-linear-to-r from-[#0c2070] via-[#3c6cd8] to-[#9cc0f8] pr-[2px] pl-[3px]">
      <AppIcon />
      <b className="flex-1 font-['Noto_Sans'] text-[9px]">Smooth Bind Options</b>
      <WinButtons />
    </header>
    <Menu items={["Edit", "Help"]} className="h-[17px] gap-[11px] pl-[6px]" />
    <div className="mx-[4px] mt-[2px] flex-1 border border-[#333] pt-[5px] outline outline-[#555] outline-offset-[-3px]">
      <Field label="Bind to:" id="bind-to">
        <div className="relative">
          <Drop id="bind-to" w="w-[86px]" options={["Joint hierarchy", "Selected joints", "Object hierarchy"]} />
          <ul className="absolute top-[15px] left-0 z-10 w-[86px] border border-[#333] bg-[#2a2a2a] pb-px leading-[11px] whitespace-nowrap shadow-[1px_1px_2px_#111]">
            <li className="bg-[#7db7f9] pl-px text-[#cfe2fb]">Joint hierarchy</li>
            <li className="pl-px">Selected joints</li>
            <li className="pl-px">Object hierarchy</li>
          </ul>
          <svg viewBox="0 0 12 18" className="absolute top-[6px] left-[52px] z-20 h-[18px] w-[12px]">
            <path d="M1 1v13l3-3 2.500 5.500 2.500-1L6.500 10H11z" fill="#fff" stroke="#333" strokeWidth="0.800" />
          </svg>
        </div>
      </Field>
      <Field label="Bind method:" id="bind-method"><Drop id="bind-method" w="w-[97px]" options={["Closest distance"]} /></Field>
      <Field h="h-[17px]" label="Skinning method:" id="skinning"><Drop id="skinning" w="w-[84px]" options={["Classic linear"]} /></Field>
      <Field h="h-[17px]" label="Normalize Weights:" id="normalize"><Drop id="normalize" w="w-[64px]" options={["Post"]} /></Field>
      <Check label="Allow multiple bind poses" />
      <Slide id="max-inf" label="Max influences:" text="5" pos={17} />
      <Check label="Maintain max influences" />
      <Slide id="dropoff" label="Dropoff rate:" text="4.0" pos={39} />
      <Check label="Remove unused influences" />
      <Check label="Colorize skeleton" />
    </div>
    <div className="flex gap-[4px] px-[4px] pt-[6px] pb-[4px]">
      {["Bind Skin", "Apply", "Close"].map((t) => (
        <button key={t} type="button" className="h-[20px] flex-1 border border-[#2e2e2e] bg-linear-to-b from-[#706d6e] to-[#5c595a]">
          {t}
        </button>
      ))}
    </div>
  </section>
);

/* ---------- channel box ---------- */

const channels = [
  ["Translate X", "0"], ["Translate Y", "0"], ["Translate Z", "0"],
  ["Rotate X", "0"], ["Rotate Y", "0"], ["Rotate Z", "0"],
  ["Scale X", "1"], ["Scale Y", "1"], ["Scale Z", "1"], ["Visibility", "on"],
];

const LayerIcon = ({ kind }: { kind: number }) => (
  <Svg size="size-[14px]">
    {kind < 2 ? (
      <>
        <path d="M7 5l9-2 3 3-9 2z" fill="#f4f0f2" />
        <path d="M7 10l9-2 3 3-9 2z" fill="#dcd8da" />
        <path d="M7 15l9-2 3 3-9 2z" fill="#c4c0c2" />
        <path d={kind ? "M3 2v12M1 11l2 5 3-5" : "M3 4v12M1 6l2-4 3 4"} stroke="#c01838" strokeWidth="2" />
      </>
    ) : (
      <>
        <path d="M0 15l6-5 13 2-6 6z" fill="#f4f0ee" />
        <path d="M15 1v9M11 5h8" stroke="#f8a040" strokeWidth="2.500" />
        {kind === 3 && <circle cx="7" cy="10" r="4" fill="#6aa4ec" />}
      </>
    )}
  </Svg>
);

const ChannelBox = () => (
  <aside className="flex w-[346px] shrink-0 flex-col pr-px pl-[8px]">
    <header className="flex h-[19px] items-center gap-[6px]">
      <Dots className="h-[6px] w-[100px]" />
      <span className="flex-1 text-center text-[8px] whitespace-nowrap">Channel Box / Layer Editor</span>
      <Dots className="h-[6px] w-[96px]" />
      <div className="flex gap-[3px]">
        {["M4 1h5v5H4zM1 4h5v5H1z", "M1.500 1.500l7 7M8.500 1.500l-7 7"].map((d, i) => (
          <button key={d} type="button" aria-label={i ? "Close panel" : "Float panel"} className="size-[10px] bg-[#2a2a2a]">
            <svg viewBox="0 0 10 10" className="size-full" fill="none"><path d={d} stroke="#aaa" strokeWidth="1.300" /></svg>
          </button>
        ))}
      </div>
    </header>
    <div className="flex h-[15px] items-center justify-end gap-[3px]">
      <Svg size="size-[13px]">
        <path d="M10 12V2" stroke="#30c840" strokeWidth="3" />
        <path d="M10 12l-7 2" stroke="#3858f0" strokeWidth="3" />
        <path d="M10 12l8 6" stroke="#e02840" strokeWidth="3" />
      </Svg>
      <Svg size="size-[13px]">
        <circle cx="10" cy="10" r="8" stroke="#ccc" strokeWidth="2" />
        <path d="M10 3a7 7 0 010 14z" fill="#999" />
        <path d="M10 3a7 7 0 000 14z" fill="#eee" />
      </Svg>
      <Svg size="size-[13px]"><path d="M2 18L14 6M9 3l9-1-2 9z" stroke="#bbb" strokeWidth="2" fill="#bbb" /></Svg>
    </div>
    <Menu items={["Channels", "Edit", "Object", "Show"]} className="h-[18px] gap-[11px] pl-[5px]" />
    <div className="flex h-[268px] flex-col border border-[#323232] outline outline-[#505050] outline-offset-[-2px]">
      <div className="mt-[15px] mr-[2px] grid h-[128px] grid-rows-10">
        {channels.map(([n, v]) => (
          <label key={n} className="flex min-h-0 items-center justify-end">
            {n}
            <input defaultValue={v} className="ml-px h-full w-[52px] border-b border-[#383838] bg-[#2a2a2a] pl-px" />
          </label>
        ))}
      </div>
      <div className="mt-[13px] h-[26px] bg-[#3a3a3a]" />
      <div className="m-[2px] flex-1 bg-[#2a2a2a]" />
    </div>
    <div className="flex h-[9px] items-center justify-center"><Dots className="h-[4px] w-[110px]" /></div>
    <div className="mt-[15px] mb-px flex flex-1 flex-col border border-[#505050] bg-[#424242] p-[2px]">
      <Menu items={["Layers", "Options", "Help"]} className="h-[12px] gap-[11px] pl-[5px]" />
      <div className="flex h-[23px] items-center justify-end gap-[6px] pr-[3px]">
        {[0, 1, 2, 3].map((k) => <LayerIcon key={k} kind={k} />)}
      </div>
      <div className="flex-1 border border-[#222] bg-[#2a2a2a]" />
    </div>
  </aside>
);

const SideTabs = () => (
  <div className="flex w-[17px] shrink-0 flex-col border-l border-[#333] pt-[3px]">
    {[
      ["Attribute Editor", "h-[78px] bg-[#3f3f3f]"],
      ["Tool Settings", "h-[68px] bg-[#3f3f3f]"],
      ["Channel Box / Layer Editor", "h-[119px] bg-[#6f6b6d]"],
    ].map(([t, c]) => (
      <button
        key={t}
        type="button"
        className={`flex w-full items-center justify-center border border-[#333] whitespace-nowrap [writing-mode:vertical-rl] ${c}`}
      >
        {t}
      </button>
    ))}
  </div>
);

/* ---------- time controls ---------- */

const transport: [string, string][] = [
  ["Go to start", "M2 5v10M10 6l-5 4 5 4zM17 6l-5 4 5 4z"],
  ["Step back frame", "M4 5v10M14 6l-6 4 6 4z"],
  ["Step back key", "M4 5v10M15 6l-7 4 7 4z"],
  ["Play backwards", "M14 5L7 10l7 5z"],
  ["Play forwards", "M6 5l7 5-7 5z"],
  ["Step forward key", "M16 5v10M5 6l7 4-7 4z"],
  ["Step forward frame", "M16 5v10M6 6l6 4-6 4z"],
  ["Go to end", "M18 5v10M10 6l5 4-5 4zM3 6l5 4-5 4z"],
];

const NumberBox = ({ v, label }: { v: string; label: string }) => (
  <input aria-label={label} defaultValue={v} className="h-[15px] w-[54px] shrink-0 bg-[#2a2a2a] pl-[3px]" />
);

const TimeSlider = () => (
  <div className="flex h-[29px] items-center border-t border-[#2c2c2c] pl-[4px]">
    <Dots className="mr-[2px] h-[20px] w-[6px]" />
    <div className="flex h-[24px] min-w-0 flex-1 bg-[#979193] px-[5px] text-[#151515]">
      {Array.from({ length: 50 }, (_, i) => (
        <div key={i} className={`relative min-w-0 flex-1 leading-[10px] ${i === 37 ? "z-10" : ""}`}>
          {i === 37 && (
            <span className="absolute top-0 left-0 block h-[11px] w-[11px] bg-[#5f5c61] pt-[12px] pl-[2px] font-bold text-white">
              75
            </span>
          )}
          <span className={`block whitespace-nowrap ${i === 49 ? "pl-[10px]" : "pl-[12px]"}`}>{2 * i + 2}</span>
          <span className="ml-[10px] block h-[12px] w-px bg-black" />
        </div>
      ))}
    </div>
    <input aria-label="Current frame" defaultValue="75.00" className="mr-[7px] ml-[3px] h-[15px] w-[54px] shrink-0 bg-[#2a2a2a] pl-[2px]" />
    <div className="mr-[4px] flex w-[172px] shrink-0 justify-between">
      {transport.map(([n, d]) => (
        <button key={n} type="button" aria-label={n}>
          <Svg size="size-[15px]">
            <path d={d} fill="#f4eef0" stroke={n.endsWith("key") ? "#e8a0a8" : "#f4eef0"} strokeWidth="2" />
          </Svg>
        </button>
      ))}
    </div>
  </div>
);

const SetMenu = ({ label }: { label: string }) => (
  <div className="flex shrink-0 items-center gap-[6px]">
    <svg viewBox="0 0 8 6" className="h-[5px] w-[7px]"><path d="M0 0h8L4 5z" stroke="#bbb" fill="none" /></svg>
    <button type="button" className="h-[15px] w-[80px] border border-[#4c4c4c] pl-[2px] text-left whitespace-nowrap">{label}</button>
  </div>
);

const RangeSlider = () => (
  <div className="flex h-[26px] items-center gap-[4px] border-t border-[#383838] pt-[2px] pl-[4px]">
    <Dots className="-mr-[2px] h-[16px] w-[6px]" />
    <NumberBox v="1.00" label="Animation start" />
    <NumberBox v="1.00" label="Playback start" />
    <div className="flex h-[16px] flex-1 bg-[#2a2a2a] py-[2px] pr-[3px] pl-[5px]">
      <div className="flex flex-1 items-center gap-[4px] bg-[#7a7577] px-[4px]">
        <span className="size-[8px] border-r border-b border-[#333]" />
        <span className="flex-1">1</span>
        <span>100</span>
        <span className="size-[8px] border-r border-b border-[#333]" />
      </div>
    </div>
    <NumberBox v="100.00" label="Playback end" />
    <NumberBox v="100.00" label="Animation end" />
    <SetMenu label="No Anim Layer" />
    <SetMenu label="No Character Set" />
    <button type="button" aria-label="Auto key" className="flex h-[15px] w-[17px] items-center justify-center border border-[#a88090] bg-[#8a3858]">
      <Svg size="size-[13px]"><path d="M9 10h10M14 10v4M17 10v4" stroke="#f0c8d8" strokeWidth="2" /><circle cx="5" cy="10" r="4" stroke="#f0c8d8" strokeWidth="2" /></Svg>
    </button>
    <button type="button" aria-label="Preferences" className="mr-[3px]">
      <Svg size="size-[12px]"><path d="M0 0h20v20H0z" fill="#fbe8ec" /><path d="M0 0h20v4H0z" fill="#5a90e0" /><path d="M5 9l10 8M15 8l-9 9M10 6v12" stroke="#d83858" strokeWidth="1.800" /></Svg>
    </button>
  </div>
);

const CommandLine = () => (
  <div className="flex h-[27px] items-center border-t border-[#383838] pl-[4px]">
    <Dots className="h-[16px] w-[6px]" />
    <label htmlFor="mel" className="w-[38px] pl-[10px]">MEL</label>
    <input id="mel" className="h-[18px] min-w-0 flex-1 bg-[#2a2a2a]" />
    <span className="w-[6px]" />
    <output className="h-[20px] w-[612px] bg-black" />
    <button type="button" aria-label="Script editor" className="mr-[3px] ml-[2px]">
      <Svg size="size-[12px]"><path d="M1 1h18v18H1z" fill="#333" stroke="#eee" strokeWidth="2" /><path d="M1 2h18" stroke="#7ab0f0" strokeWidth="3" /><path d="M3 10h14M3 14h14" stroke="#ddd" strokeWidth="1.500" /></Svg>
    </button>
  </div>
);

export default function App() {
  return (
    <div className="flex min-h-screen flex-col bg-black pt-[26px] pb-[32px] pl-px font-['Lato',sans-serif] text-[9px] leading-[12px] text-[#f4eef1] [font-variant-ligatures:none]">
      <main className="flex flex-1 flex-col bg-[#434343]">
        <Menu
          className="h-[16px] gap-[10px] pl-[7px]"
          items={[
            "File", "Edit", "Modify", "Create", "Display", "Window", "Assets", "Animate", "Geometry Cache",
            "Create Deformers", "Edit Deformers", "Skeleton", "Skin", "Constrain", "Character", "Help",
          ]}
        />
        <StatusLine />
        <Shelf />
        <div className="relative flex flex-1 border-t border-[#353535]">
          <ToolBox />
          <div className="flex min-w-0 flex-1 flex-col">
            <Menu
              items={["View", "Shading", "Lighting", "Show", "Renderer", "Panels"]}
              className="h-[20px] gap-[10px] pt-[2px] pl-[6px]"
            />
            <div className="relative flex-1">
              <Scene />
              <Outliner />
            </div>
          </div>
          <ChannelBox />
          <SideTabs />
          <Dialog />
        </div>
        <TimeSlider />
        <RangeSlider />
        <CommandLine />
      </main>
    </div>
  );
}
